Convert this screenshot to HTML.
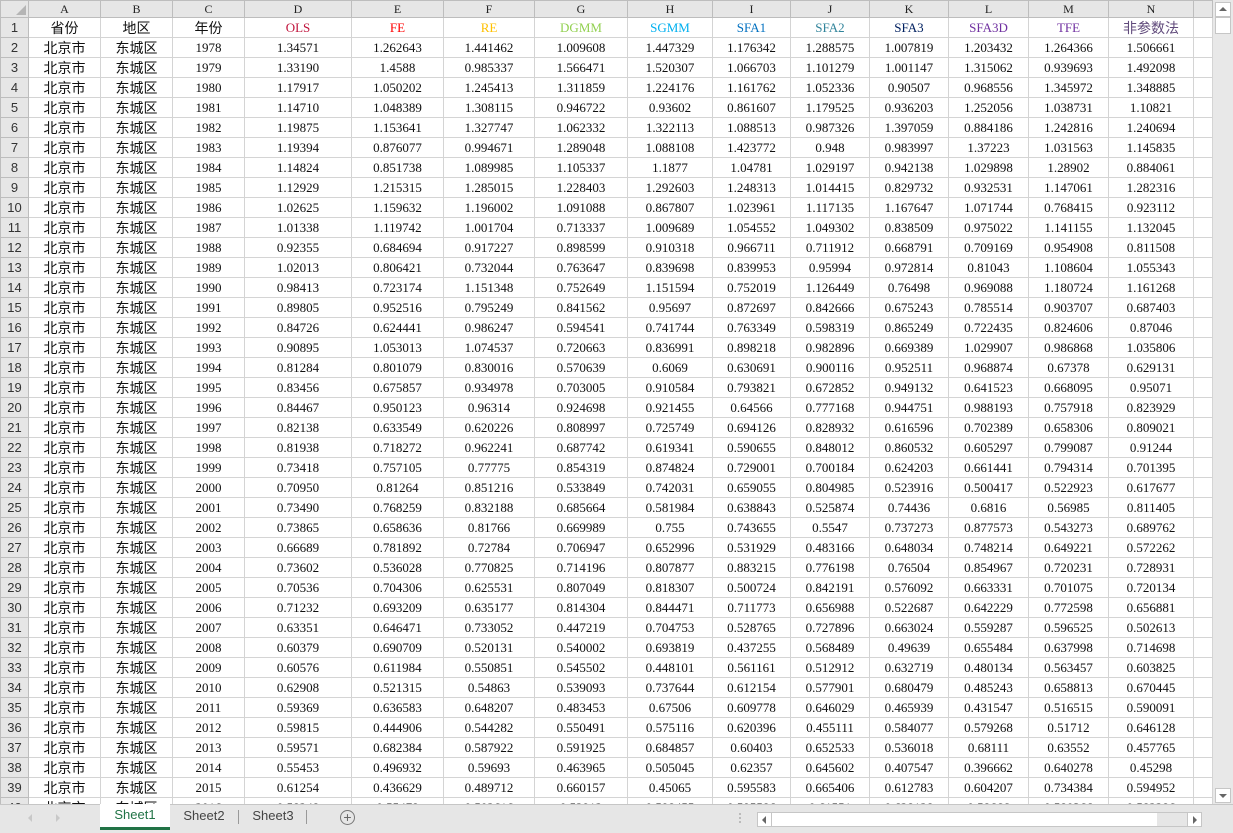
<!DOCTYPE html>
<html><head><meta charset="utf-8">
<style>
*{margin:0;padding:0;box-sizing:border-box}
body{width:1233px;height:833px;overflow:hidden;background:#fff;position:relative;font-family:"Liberation Serif","Noto Serif CJK SC",serif}
#grid{position:absolute;left:0;top:0;width:1213px;height:804px;overflow:hidden;background:#fff}
table{border-collapse:collapse;table-layout:fixed;width:1212px}
td{height:20px;border:1px solid #d4d4d4;text-align:center;font-size:13px;color:#111;white-space:nowrap;overflow:hidden;padding:0;line-height:18px}
tr.h td{height:17px;background:#e6e6e6;border-color:#bdbdbd;font-size:12px;color:#222;line-height:15px}
td.r{background:#e6e6e6;border-color:#bdbdbd;font-family:"Liberation Sans",sans-serif;color:#333;font-size:13px}
td.c{font-family:"Liberation Sans","Noto Sans CJK SC",sans-serif;font-size:14px}
#vs{position:absolute;left:1213px;top:0;width:20px;height:804px;background:#e8e8e8}
#tabs{position:absolute;left:0;top:804px;width:1233px;height:29px;background:#e6e6e6;border-top:1px solid #c6c6c6;font-family:"Liberation Sans",sans-serif}
.tab{position:absolute;top:0;height:24px;line-height:22px;font-size:13px;color:#444;text-align:center}
</style></head><body>
<div id="grid">
<table>
<colgroup><col style="width:28px"><col style="width:72px"><col style="width:72px"><col style="width:72px"><col style="width:107px"><col style="width:92px"><col style="width:91px"><col style="width:93px"><col style="width:85px"><col style="width:78px"><col style="width:79px"><col style="width:79px"><col style="width:80px"><col style="width:80px"><col style="width:85px"><col style="width:19px"></colgroup>
<tr class="h"><td style="position:relative"><div style="position:absolute;right:2px;bottom:2px;width:0;height:0;border-left:10px solid transparent;border-bottom:10px solid #b5b5b5"></div></td><td>A</td><td>B</td><td>C</td><td>D</td><td>E</td><td>F</td><td>G</td><td>H</td><td>I</td><td>J</td><td>K</td><td>L</td><td>M</td><td>N</td><td></td></tr>
<tr><td class="r">1</td><td class="c">省份</td><td class="c">地区</td><td class="c">年份</td><td style="color:#c0143c">OLS</td><td style="color:#ff0000">FE</td><td style="color:#ffc000">RE</td><td style="color:#92d050">DGMM</td><td style="color:#00b0f0">SGMM</td><td style="color:#0070c0">SFA1</td><td style="color:#31849b">SFA2</td><td style="color:#002060">SFA3</td><td style="color:#7030a0">SFA3D</td><td style="color:#7030a0">TFE</td><td class="c" style="color:#604a7b">非参数法</td><td></td></tr>
<tr><td class="r">2</td><td class="c">北京市</td><td class="c">东城区</td><td>1978</td><td>1.34571</td><td>1.262643</td><td>1.441462</td><td>1.009608</td><td>1.447329</td><td>1.176342</td><td>1.288575</td><td>1.007819</td><td>1.203432</td><td>1.264366</td><td>1.506661</td><td></td></tr>
<tr><td class="r">3</td><td class="c">北京市</td><td class="c">东城区</td><td>1979</td><td>1.33190</td><td>1.4588</td><td>0.985337</td><td>1.566471</td><td>1.520307</td><td>1.066703</td><td>1.101279</td><td>1.001147</td><td>1.315062</td><td>0.939693</td><td>1.492098</td><td></td></tr>
<tr><td class="r">4</td><td class="c">北京市</td><td class="c">东城区</td><td>1980</td><td>1.17917</td><td>1.050202</td><td>1.245413</td><td>1.311859</td><td>1.224176</td><td>1.161762</td><td>1.052336</td><td>0.90507</td><td>0.968556</td><td>1.345972</td><td>1.348885</td><td></td></tr>
<tr><td class="r">5</td><td class="c">北京市</td><td class="c">东城区</td><td>1981</td><td>1.14710</td><td>1.048389</td><td>1.308115</td><td>0.946722</td><td>0.93602</td><td>0.861607</td><td>1.179525</td><td>0.936203</td><td>1.252056</td><td>1.038731</td><td>1.10821</td><td></td></tr>
<tr><td class="r">6</td><td class="c">北京市</td><td class="c">东城区</td><td>1982</td><td>1.19875</td><td>1.153641</td><td>1.327747</td><td>1.062332</td><td>1.322113</td><td>1.088513</td><td>0.987326</td><td>1.397059</td><td>0.884186</td><td>1.242816</td><td>1.240694</td><td></td></tr>
<tr><td class="r">7</td><td class="c">北京市</td><td class="c">东城区</td><td>1983</td><td>1.19394</td><td>0.876077</td><td>0.994671</td><td>1.289048</td><td>1.088108</td><td>1.423772</td><td>0.948</td><td>0.983997</td><td>1.37223</td><td>1.031563</td><td>1.145835</td><td></td></tr>
<tr><td class="r">8</td><td class="c">北京市</td><td class="c">东城区</td><td>1984</td><td>1.14824</td><td>0.851738</td><td>1.089985</td><td>1.105337</td><td>1.1877</td><td>1.04781</td><td>1.029197</td><td>0.942138</td><td>1.029898</td><td>1.28902</td><td>0.884061</td><td></td></tr>
<tr><td class="r">9</td><td class="c">北京市</td><td class="c">东城区</td><td>1985</td><td>1.12929</td><td>1.215315</td><td>1.285015</td><td>1.228403</td><td>1.292603</td><td>1.248313</td><td>1.014415</td><td>0.829732</td><td>0.932531</td><td>1.147061</td><td>1.282316</td><td></td></tr>
<tr><td class="r">10</td><td class="c">北京市</td><td class="c">东城区</td><td>1986</td><td>1.02625</td><td>1.159632</td><td>1.196002</td><td>1.091088</td><td>0.867807</td><td>1.023961</td><td>1.117135</td><td>1.167647</td><td>1.071744</td><td>0.768415</td><td>0.923112</td><td></td></tr>
<tr><td class="r">11</td><td class="c">北京市</td><td class="c">东城区</td><td>1987</td><td>1.01338</td><td>1.119742</td><td>1.001704</td><td>0.713337</td><td>1.009689</td><td>1.054552</td><td>1.049302</td><td>0.838509</td><td>0.975022</td><td>1.141155</td><td>1.132045</td><td></td></tr>
<tr><td class="r">12</td><td class="c">北京市</td><td class="c">东城区</td><td>1988</td><td>0.92355</td><td>0.684694</td><td>0.917227</td><td>0.898599</td><td>0.910318</td><td>0.966711</td><td>0.711912</td><td>0.668791</td><td>0.709169</td><td>0.954908</td><td>0.811508</td><td></td></tr>
<tr><td class="r">13</td><td class="c">北京市</td><td class="c">东城区</td><td>1989</td><td>1.02013</td><td>0.806421</td><td>0.732044</td><td>0.763647</td><td>0.839698</td><td>0.839953</td><td>0.95994</td><td>0.972814</td><td>0.81043</td><td>1.108604</td><td>1.055343</td><td></td></tr>
<tr><td class="r">14</td><td class="c">北京市</td><td class="c">东城区</td><td>1990</td><td>0.98413</td><td>0.723174</td><td>1.151348</td><td>0.752649</td><td>1.151594</td><td>0.752019</td><td>1.126449</td><td>0.76498</td><td>0.969088</td><td>1.180724</td><td>1.161268</td><td></td></tr>
<tr><td class="r">15</td><td class="c">北京市</td><td class="c">东城区</td><td>1991</td><td>0.89805</td><td>0.952516</td><td>0.795249</td><td>0.841562</td><td>0.95697</td><td>0.872697</td><td>0.842666</td><td>0.675243</td><td>0.785514</td><td>0.903707</td><td>0.687403</td><td></td></tr>
<tr><td class="r">16</td><td class="c">北京市</td><td class="c">东城区</td><td>1992</td><td>0.84726</td><td>0.624441</td><td>0.986247</td><td>0.594541</td><td>0.741744</td><td>0.763349</td><td>0.598319</td><td>0.865249</td><td>0.722435</td><td>0.824606</td><td>0.87046</td><td></td></tr>
<tr><td class="r">17</td><td class="c">北京市</td><td class="c">东城区</td><td>1993</td><td>0.90895</td><td>1.053013</td><td>1.074537</td><td>0.720663</td><td>0.836991</td><td>0.898218</td><td>0.982896</td><td>0.669389</td><td>1.029907</td><td>0.986868</td><td>1.035806</td><td></td></tr>
<tr><td class="r">18</td><td class="c">北京市</td><td class="c">东城区</td><td>1994</td><td>0.81284</td><td>0.801079</td><td>0.830016</td><td>0.570639</td><td>0.6069</td><td>0.630691</td><td>0.900116</td><td>0.952511</td><td>0.968874</td><td>0.67378</td><td>0.629131</td><td></td></tr>
<tr><td class="r">19</td><td class="c">北京市</td><td class="c">东城区</td><td>1995</td><td>0.83456</td><td>0.675857</td><td>0.934978</td><td>0.703005</td><td>0.910584</td><td>0.793821</td><td>0.672852</td><td>0.949132</td><td>0.641523</td><td>0.668095</td><td>0.95071</td><td></td></tr>
<tr><td class="r">20</td><td class="c">北京市</td><td class="c">东城区</td><td>1996</td><td>0.84467</td><td>0.950123</td><td>0.96314</td><td>0.924698</td><td>0.921455</td><td>0.64566</td><td>0.777168</td><td>0.944751</td><td>0.988193</td><td>0.757918</td><td>0.823929</td><td></td></tr>
<tr><td class="r">21</td><td class="c">北京市</td><td class="c">东城区</td><td>1997</td><td>0.82138</td><td>0.633549</td><td>0.620226</td><td>0.808997</td><td>0.725749</td><td>0.694126</td><td>0.828932</td><td>0.616596</td><td>0.702389</td><td>0.658306</td><td>0.809021</td><td></td></tr>
<tr><td class="r">22</td><td class="c">北京市</td><td class="c">东城区</td><td>1998</td><td>0.81938</td><td>0.718272</td><td>0.962241</td><td>0.687742</td><td>0.619341</td><td>0.590655</td><td>0.848012</td><td>0.860532</td><td>0.605297</td><td>0.799087</td><td>0.91244</td><td></td></tr>
<tr><td class="r">23</td><td class="c">北京市</td><td class="c">东城区</td><td>1999</td><td>0.73418</td><td>0.757105</td><td>0.77775</td><td>0.854319</td><td>0.874824</td><td>0.729001</td><td>0.700184</td><td>0.624203</td><td>0.661441</td><td>0.794314</td><td>0.701395</td><td></td></tr>
<tr><td class="r">24</td><td class="c">北京市</td><td class="c">东城区</td><td>2000</td><td>0.70950</td><td>0.81264</td><td>0.851216</td><td>0.533849</td><td>0.742031</td><td>0.659055</td><td>0.804985</td><td>0.523916</td><td>0.500417</td><td>0.522923</td><td>0.617677</td><td></td></tr>
<tr><td class="r">25</td><td class="c">北京市</td><td class="c">东城区</td><td>2001</td><td>0.73490</td><td>0.768259</td><td>0.832188</td><td>0.685664</td><td>0.581984</td><td>0.638843</td><td>0.525874</td><td>0.74436</td><td>0.6816</td><td>0.56985</td><td>0.811405</td><td></td></tr>
<tr><td class="r">26</td><td class="c">北京市</td><td class="c">东城区</td><td>2002</td><td>0.73865</td><td>0.658636</td><td>0.81766</td><td>0.669989</td><td>0.755</td><td>0.743655</td><td>0.5547</td><td>0.737273</td><td>0.877573</td><td>0.543273</td><td>0.689762</td><td></td></tr>
<tr><td class="r">27</td><td class="c">北京市</td><td class="c">东城区</td><td>2003</td><td>0.66689</td><td>0.781892</td><td>0.72784</td><td>0.706947</td><td>0.652996</td><td>0.531929</td><td>0.483166</td><td>0.648034</td><td>0.748214</td><td>0.649221</td><td>0.572262</td><td></td></tr>
<tr><td class="r">28</td><td class="c">北京市</td><td class="c">东城区</td><td>2004</td><td>0.73602</td><td>0.536028</td><td>0.770825</td><td>0.714196</td><td>0.807877</td><td>0.883215</td><td>0.776198</td><td>0.76504</td><td>0.854967</td><td>0.720231</td><td>0.728931</td><td></td></tr>
<tr><td class="r">29</td><td class="c">北京市</td><td class="c">东城区</td><td>2005</td><td>0.70536</td><td>0.704306</td><td>0.625531</td><td>0.807049</td><td>0.818307</td><td>0.500724</td><td>0.842191</td><td>0.576092</td><td>0.663331</td><td>0.701075</td><td>0.720134</td><td></td></tr>
<tr><td class="r">30</td><td class="c">北京市</td><td class="c">东城区</td><td>2006</td><td>0.71232</td><td>0.693209</td><td>0.635177</td><td>0.814304</td><td>0.844471</td><td>0.711773</td><td>0.656988</td><td>0.522687</td><td>0.642229</td><td>0.772598</td><td>0.656881</td><td></td></tr>
<tr><td class="r">31</td><td class="c">北京市</td><td class="c">东城区</td><td>2007</td><td>0.63351</td><td>0.646471</td><td>0.733052</td><td>0.447219</td><td>0.704753</td><td>0.528765</td><td>0.727896</td><td>0.663024</td><td>0.559287</td><td>0.596525</td><td>0.502613</td><td></td></tr>
<tr><td class="r">32</td><td class="c">北京市</td><td class="c">东城区</td><td>2008</td><td>0.60379</td><td>0.690709</td><td>0.520131</td><td>0.540002</td><td>0.693819</td><td>0.437255</td><td>0.568489</td><td>0.49639</td><td>0.655484</td><td>0.637998</td><td>0.714698</td><td></td></tr>
<tr><td class="r">33</td><td class="c">北京市</td><td class="c">东城区</td><td>2009</td><td>0.60576</td><td>0.611984</td><td>0.550851</td><td>0.545502</td><td>0.448101</td><td>0.561161</td><td>0.512912</td><td>0.632719</td><td>0.480134</td><td>0.563457</td><td>0.603825</td><td></td></tr>
<tr><td class="r">34</td><td class="c">北京市</td><td class="c">东城区</td><td>2010</td><td>0.62908</td><td>0.521315</td><td>0.54863</td><td>0.539093</td><td>0.737644</td><td>0.612154</td><td>0.577901</td><td>0.680479</td><td>0.485243</td><td>0.658813</td><td>0.670445</td><td></td></tr>
<tr><td class="r">35</td><td class="c">北京市</td><td class="c">东城区</td><td>2011</td><td>0.59369</td><td>0.636583</td><td>0.648207</td><td>0.483453</td><td>0.67506</td><td>0.609778</td><td>0.646029</td><td>0.465939</td><td>0.431547</td><td>0.516515</td><td>0.590091</td><td></td></tr>
<tr><td class="r">36</td><td class="c">北京市</td><td class="c">东城区</td><td>2012</td><td>0.59815</td><td>0.444906</td><td>0.544282</td><td>0.550491</td><td>0.575116</td><td>0.620396</td><td>0.455111</td><td>0.584077</td><td>0.579268</td><td>0.51712</td><td>0.646128</td><td></td></tr>
<tr><td class="r">37</td><td class="c">北京市</td><td class="c">东城区</td><td>2013</td><td>0.59571</td><td>0.682384</td><td>0.587922</td><td>0.591925</td><td>0.684857</td><td>0.60403</td><td>0.652533</td><td>0.536018</td><td>0.68111</td><td>0.63552</td><td>0.457765</td><td></td></tr>
<tr><td class="r">38</td><td class="c">北京市</td><td class="c">东城区</td><td>2014</td><td>0.55453</td><td>0.496932</td><td>0.59693</td><td>0.463965</td><td>0.505045</td><td>0.62357</td><td>0.645602</td><td>0.407547</td><td>0.396662</td><td>0.640278</td><td>0.45298</td><td></td></tr>
<tr><td class="r">39</td><td class="c">北京市</td><td class="c">东城区</td><td>2015</td><td>0.61254</td><td>0.436629</td><td>0.489712</td><td>0.660157</td><td>0.45065</td><td>0.595583</td><td>0.665406</td><td>0.612783</td><td>0.604207</td><td>0.734384</td><td>0.594952</td><td></td></tr>
<tr><td class="r">40</td><td class="c">北京市</td><td class="c">东城区</td><td>2016</td><td>0.58248</td><td>0.55478</td><td>0.502616</td><td>0.52912</td><td>0.598455</td><td>0.595586</td><td>0.61551</td><td>0.628128</td><td>0.58666</td><td>0.580366</td><td>0.582286</td><td></td></tr>
</table>
</div>
<div id="vs">
  <div style="position:absolute;left:2px;top:2px;width:16px;height:15px;background:#fff;border:1px solid #c6c6c6"><div style="margin:4px auto 0;width:0;height:0;border-left:4px solid transparent;border-right:4px solid transparent;border-bottom:4px solid #666"></div></div>
  <div style="position:absolute;left:2px;top:17px;width:16px;height:17px;background:#fff;border:1px solid #c6c6c6"></div>
  <div style="position:absolute;left:2px;top:788px;width:16px;height:15px;background:#fff;border:1px solid #c6c6c6"><div style="margin:5px auto 0;width:0;height:0;border-left:4px solid transparent;border-right:4px solid transparent;border-top:4px solid #666"></div></div>
</div>
<div id="tabs">
  <div style="position:absolute;left:28px;top:9px;width:0;height:0;border-top:4px solid transparent;border-bottom:4px solid transparent;border-right:4px solid #c8c8c8"></div>
  <div style="position:absolute;left:56px;top:9px;width:0;height:0;border-top:4px solid transparent;border-bottom:4px solid transparent;border-left:4px solid #c8c8c8"></div>
  <div class="tab" style="left:100px;width:70px;background:#fff;color:#217346;border-bottom:3px solid #217346;margin-top:-1px;height:26px">Sheet1</div>
  <div class="tab" style="left:170px;width:68px">Sheet2</div>
  <div style="position:absolute;left:238px;top:5px;width:1px;height:14px;background:#999"></div>
  <div class="tab" style="left:239px;width:68px">Sheet3</div>
  <div style="position:absolute;left:306px;top:5px;width:1px;height:14px;background:#999"></div>
  <div style="position:absolute;left:340px;top:5px;width:15px;height:15px;border:1px solid #777;border-radius:50%;text-align:center;line-height:13px;font-size:14px;color:#666">+</div>
  <div style="position:absolute;left:739px;top:8px;width:2px;height:10px;border-left:2px dotted #bbb"></div>
  <div style="position:absolute;left:757px;top:7px;width:445px;height:15px;background:#fff;border:1px solid #c6c6c6"></div>
  <div style="position:absolute;left:757px;top:7px;width:15px;height:15px;border:1px solid #c6c6c6;background:#fff"><div style="margin:3px 0 0 4px;width:0;height:0;border-top:4px solid transparent;border-bottom:4px solid transparent;border-right:4px solid #666"></div></div>
  <div style="position:absolute;left:1157px;top:8px;width:30px;height:13px;background:#e6e6e6"></div>
  <div style="position:absolute;left:1187px;top:7px;width:15px;height:15px;border:1px solid #c6c6c6;background:#fff"><div style="margin:3px 0 0 5px;width:0;height:0;border-top:4px solid transparent;border-bottom:4px solid transparent;border-left:4px solid #666"></div></div>
</div>
</body></html>
